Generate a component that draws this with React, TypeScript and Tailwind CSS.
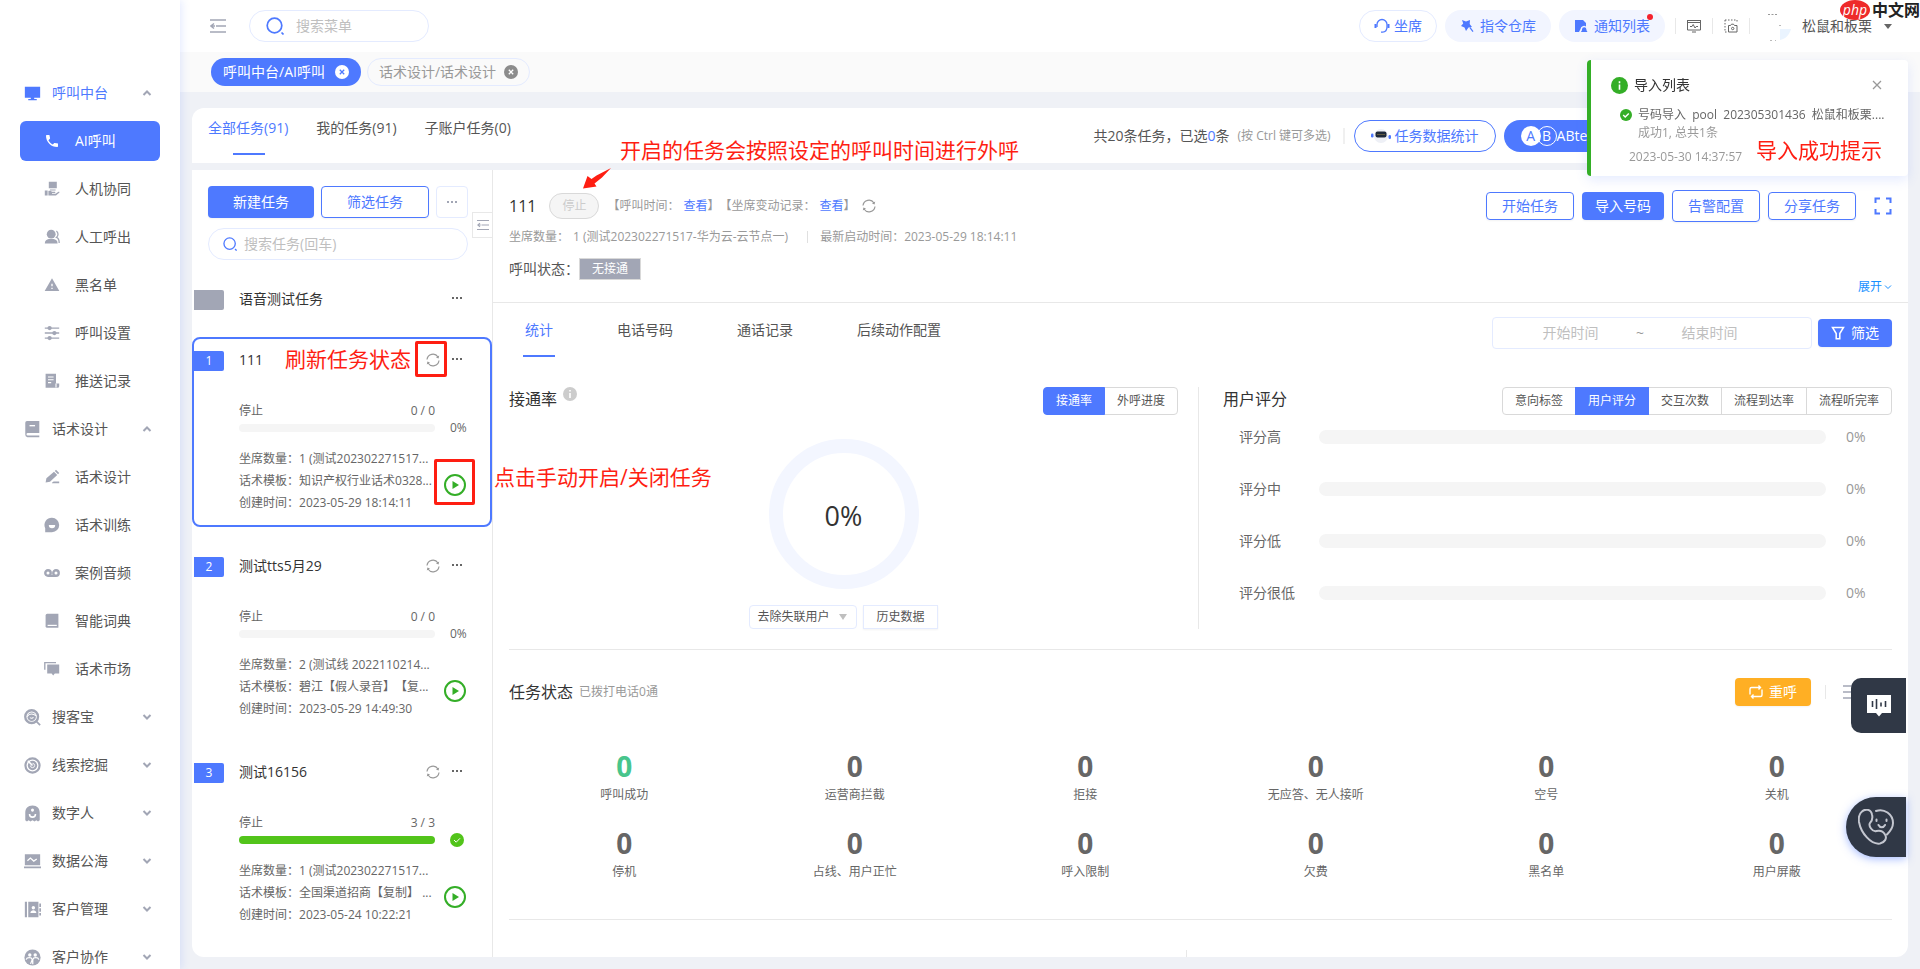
import { useState } from 'react'
import type { ReactNode } from 'react'
import { MdPhone, MdWarning } from 'react-icons/md'

const iconShapes: Record<string, ReactNode> = {
  monitor: <path d="M1 2h18v13h-7v1.6h3V18H5v-1.4h3V15H1z" />,
  handover: (
    <path d="M6 1h10v8H6zm1.500 9.500h7V12h-7zM1 12h3.500v6H1zm4.500.5c2-.6 3.500.2 4.500 1h3.500c1 0 1 1.500 0 1.500H10v.8h4.500l3.500-2.300c1.200-.6 1.800.6 1 1.300L15 18H5.500z" />
  ),
  users: (
    <>
      <circle cx="9" cy="6.500" r="5.500" />
      <path d="M1 18c0-3.500 2.500-5 5-5.500h6c2.500.5 5 2 5 5.500z" />
      <path d="M15.500 2.500a5 5 0 0 1 0 8c2.500.8 3.500 3.500 3.500 7" fill="none" stroke="currentColor" strokeWidth="1.600" />
    </>
  ),
  sliders: (
    <>
      <path d="M1 3h18v1.800H1zM1 9.200h18V11H1zM1 15.500h18v1.800H1z" />
      <circle cx="7" cy="3.900" r="2.700" />
      <circle cx="13" cy="10.100" r="2.700" />
      <circle cx="7" cy="16.400" r="2.700" />
    </>
  ),
  record: (
    <>
      <path d="M2 1h13v12h4v3.500a2 2 0 0 1-2 2H2z" />
      <path d="M5 5h7M5 8.500h7M5 12h4M15 13v5" stroke="#fff" strokeWidth="1.400" />
    </>
  ),
  script: (
    <>
      <path d="M3.500 0H18v14H4.500a1.400 1.400 0 0 0 0 3.200H18V19H4a2.800 2.800 0 0 1-2.500-3V2a2 2 0 0 1 2-2z" />
      <path d="M6.500 5.500H13" stroke="#fff" strokeWidth="1.600" />
    </>
  ),
  pen: <path d="M12.500 3.500l4 4L7.500 16 2 17l1-5.500zM13.500 2.500L15 1l4 4-1.500 1.500zM10 17.200l2-1.700h7v2.200h-9z" />,
  chat: (
    <>
      <path d="M10 1a9 9 0 1 1 0 18H1.500v-5A9 9 0 0 1 10 1z" />
      <path d="M6 10h8a4 4 0 0 1-8 0z" fill="#fff" />
    </>
  ),
  voicemail: (
    <>
      <path d="M5 12.500h10V15H5z" />
      <circle cx="5" cy="10" r="3.400" fill="none" stroke="currentColor" strokeWidth="3" />
      <circle cx="15" cy="10" r="3.400" fill="none" stroke="currentColor" strokeWidth="3" />
    </>
  ),
  book: (
    <>
      <path d="M4 1h14v17.500H4a2 2 0 0 1-2-2V3a2 2 0 0 1 2-2z" />
      <path d="M4.500 15.500H16" stroke="#fff" strokeWidth="1.500" />
    </>
  ),
  market: (
    <>
      <path d="M1 11V2h14" fill="none" stroke="currentColor" strokeWidth="1.700" />
      <path d="M4 4.500h15v11h-5.500L11.500 18l-2-2.500H4z" />
    </>
  ),
  finder: (
    <>
      <circle cx="9" cy="9" r="7.500" fill="none" stroke="currentColor" strokeWidth="2.800" />
      <circle cx="9" cy="9" r="5" />
      <path d="M3.500 9c2.500-3.500 6-4.500 11-1" fill="none" stroke="#fff" strokeWidth="1.200" />
      <path d="M7 10c1.500 1.500 3.500 1 4-.5" fill="none" stroke="#fff" strokeWidth="1.200" />
      <path d="M14.500 14.500L19 19" stroke="currentColor" strokeWidth="2" />
    </>
  ),
  radar: (
    <>
      <circle cx="10" cy="10" r="8.300" fill="none" stroke="currentColor" strokeWidth="2.600" />
      <circle cx="10" cy="10" r="5.500" />
      <path d="M4.500 4.500L10 10" stroke="#fff" strokeWidth="1.800" />
      <path d="M10 7.500a2.500 2.500 0 1 1-2.500 2.500" fill="none" stroke="#fff" />
    </>
  ),
  ghost: (
    <>
      <path d="M10 .5c5.500 0 8.500 3.500 8.500 8.500v9l-2 1.500-2-1.500-2 1.500-2.500-1.500-2.500 1.500-2-1.500-2 1.500-2-1.500V9C1.500 4 4.500.5 10 .5z" />
      <circle cx="10" cy="6" r="1.800" fill="#fff" />
      <path d="M6.500 10.500c0 5 7 5 7 0" fill="none" stroke="#fff" strokeWidth="1.800" />
    </>
  ),
  chart: (
    <>
      <path d="M1 1.500h18v13H1zM0 16h20v2H0z" />
      <path d="M4 9l3.500-3 4 3.500L15 7" fill="none" stroke="#fff" strokeWidth="1.500" />
    </>
  ),
  contacts: (
    <>
      <path d="M1 1h2.500v18H1zM5 1h12v18H5zM18 3h2v4h-2zM18 8.500h2v4h-2zM18 14h2v3h-2z" />
      <circle cx="11" cy="8" r="2" fill="#fff" />
      <path d="M7.500 14c0-4 7-4 7 0z" fill="#fff" />
    </>
  ),
  team: (
    <>
      <circle cx="10" cy="10" r="9.500" />
      <circle cx="6.800" cy="7" r="2" fill="#fff" />
      <circle cx="13.200" cy="7" r="2" fill="#fff" />
      <path d="M2.500 12.500c1-3 6.500-3 7.200 0l-2 5M17.500 12.500c-1-3-6.500-3-7.200 0v5.500" fill="none" stroke="#fff" strokeWidth="1.500" />
    </>
  ),
}

function Icon({ name, className = 'size-4' }: { name: string; className?: string }) {
  if (name === 'phone') return <MdPhone className={className} />
  if (name === 'warning') return <MdWarning className={className} />
  return (
    <svg viewBox="0 0 20 20" fill="currentColor" className={className}>
      {iconShapes[name]}
    </svg>
  )
}

function Chevron({ up = false, className = 'size-2.5' }: { up?: boolean; className?: string }) {
  return (
    <svg viewBox="0 0 10 10" fill="none" stroke="currentColor" strokeWidth="2" className={className}>
      <path d={up ? 'M1.500 7L5 3.500 8.500 7' : 'M1.500 3L5 6.500 8.500 3'} />
    </svg>
  )
}

function SearchIcon({ className }: { className: string }) {
  return (
    <svg viewBox="0 0 18 18" fill="none" stroke="currentColor" strokeWidth="1.700" className={className}>
      <circle cx="8.500" cy="8.500" r="7.300" />
      <path d="M15.500 15.500l2 2" />
    </svg>
  )
}

function FoldIcon({ className = 'size-4' }: { className?: string }) {
  return (
    <svg viewBox="0 0 16 16" fill="none" stroke="currentColor" strokeWidth="1.500" className={className}>
      <path d="M0 2h16M6 8h10M0 14h16M4 5.500L1 8l3 2.500M1 8h4" />
    </svg>
  )
}

function SyncIcon({ className = 'size-3.5' }: { className?: string }) {
  return (
    <svg viewBox="0 0 14 14" fill="none" stroke="currentColor" strokeWidth="1.200" className={className}>
      <path d="M1 6.500A6 6 0 0 1 12 4M13 7.500A6 6 0 0 1 2 10" />
      <path d="M13.200 2.600L12.600 5.600 10 4.400zM.8 11.400l.6-3L4 9.600z" fill="currentColor" stroke="none" />
    </svg>
  )
}

function CloseDot({ active = false }: { active?: boolean }) {
  return (
    <svg viewBox="0 0 14 14" className="size-3.5">
      <circle cx="7" cy="7" r="7" fill={active ? '#fff' : '#8c8c8c'} />
      <path d="M4.800 4.800l4.400 4.400M9.200 4.800L4.800 9.200" stroke={active ? '#4e79ff' : '#fff'} strokeWidth="1.300" />
    </svg>
  )
}

function Dots() {
  return (
    <svg viewBox="0 0 12 4" fill="currentColor" className="h-1 w-3">
      <path d="M1 1h2v2H1zM5 1h2v2H5zM9 1h2v2H9z" />
    </svg>
  )
}

const menu = [
  {
    icon: 'monitor',
    label: '呼叫中台',
    open: true,
    active: true,
    children: [
      { icon: 'phone', label: 'AI呼叫', active: true },
      { icon: 'handover', label: '人机协同' },
      { icon: 'users', label: '人工呼出' },
      { icon: 'warning', label: '黑名单' },
      { icon: 'sliders', label: '呼叫设置' },
      { icon: 'record', label: '推送记录' },
    ],
  },
  {
    icon: 'script',
    label: '话术设计',
    open: true,
    children: [
      { icon: 'pen', label: '话术设计' },
      { icon: 'chat', label: '话术训练' },
      { icon: 'voicemail', label: '案例音频' },
      { icon: 'book', label: '智能词典' },
      { icon: 'market', label: '话术市场' },
    ],
  },
  { icon: 'finder', label: '搜客宝' },
  { icon: 'radar', label: '线索挖掘' },
  { icon: 'ghost', label: '数字人' },
  { icon: 'chart', label: '数据公海' },
  { icon: 'contacts', label: '客户管理' },
  { icon: 'team', label: '客户协作' },
] as {
  icon: string
  label: string
  open?: boolean
  active?: boolean
  children?: { icon: string; label: string; active?: boolean }[]
}[]

function Sidebar() {
  return (
    <aside className="relative z-10 w-45 shrink-0 overflow-hidden bg-white pt-[69px] shadow-[2px_0_8px_rgba(78,121,255,0.15)]">
      {menu.map((group) => (
        <div key={group.label}>
          <button
            className={`flex h-12 w-full items-center pr-7 pl-6 ${group.active ? 'text-[#4e79ff]' : 'text-[#555]'}`}
          >
            <Icon name={group.icon} className={`size-[17px] ${group.active ? '' : 'text-[#a2a6b5]'}`} />
            <span className="ml-[11px]">{group.label}</span>
            <Chevron up={group.open} className="ml-auto size-2.5 text-[#a2a6b5]" />
          </button>
          {group.children?.map((item) => (
            <div key={item.label} className="flex h-12 items-center px-5">
              <a
                href="#"
                className={`flex h-10 w-full items-center rounded-md pl-6 ${
                  item.active ? 'bg-[#4e79ff] text-white' : 'text-[#555]'
                }`}
              >
                <Icon name={item.icon} className={`size-4 ${item.active ? '' : 'text-[#a2a6b5]'}`} />
                <span className="ml-[15px]">{item.label}</span>
              </a>
            </div>
          ))}
        </div>
      ))}
    </aside>
  )
}

function Header() {
  return (
    <header className="relative flex h-13 shrink-0 items-center bg-white pr-7 pl-[30px]">
      <button aria-label="收起菜单" className="text-[#a2a6b5]">
        <FoldIcon />
      </button>
      <label className="ml-[23px] flex h-8 w-45 items-center rounded-full border border-[#e4ebff] pl-4 text-[#4e79ff]">
        <SearchIcon className="size-[18px] shrink-0" />
        <input
          aria-label="搜索菜单"
          placeholder="搜索菜单"
          className="ml-3 w-full min-w-0 text-[#333] outline-none placeholder:text-[#bfbfbf]"
        />
      </label>

      <div className="ml-auto flex items-center">
        <button className="flex h-8 items-center gap-1 rounded-full border border-[#e4ebff] px-3.5 text-[#4e79ff]">
          <svg viewBox="0 0 16 16" fill="none" stroke="currentColor" strokeWidth="1.300" className="size-4">
            <path d="M3 9V6.500a5 5 0 0 1 10 0V9c0 3-2 5-4.500 5.200H7" />
            <path d="M1.500 6v4M14.500 6v4" strokeWidth="2" />
          </svg>
          坐席
        </button>
        <button className="ml-2 flex h-8 items-center gap-1.5 rounded-full bg-[#f2f5ff] px-[15px] text-[#4e79ff]">
          <svg viewBox="0 0 14 14" fill="currentColor" className="size-3.5">
            <path d="M2 1l4 1.500L10 1l-.3 4L12 8l-3.500.5L6 12 4.500 8.500 1 7l2.200-2.600zM9.500 9l1-.8 3 4-1 .8z" />
          </svg>
          指令仓库
        </button>
        <button className="relative ml-2 flex h-8 items-center gap-1.5 rounded-full bg-[#f2f5ff] px-[15px] text-[#4e79ff]">
          <svg viewBox="0 0 14 14" fill="currentColor" className="size-3.5">
            <path d="M1 1h8l3 3v3.500A3.500 3.500 0 0 0 6.500 10L5 13H1z" />
            <path d="M7 13c0-1 1-1 1-2.500a2.200 2.200 0 0 1 4.400 0c0 1.500 1 1.500 1 2.500z" />
          </svg>
          通知列表
          <span className="absolute top-1 right-3 size-1.5 rounded-full bg-[#f5222d]" />
        </button>
        <div className="ml-2.5 flex items-center text-[#666]">
          <span className="h-4 w-px bg-[#e8e8e8]" />
          <button aria-label="监控" className="px-[11px]">
            <svg viewBox="0 0 14 14" fill="none" stroke="currentColor" className="size-3.5">
              <path d="M0 1.500h14M.5 1.500v9.500h13V1.500M.5 3.500h13M3 7.500h2l1.200-2 1.800 3.500 1.200-1.500H11M5 13h4" />
            </svg>
          </button>
          <span className="h-4 w-px bg-[#e8e8e8]" />
          <button aria-label="截图" className="px-[11px]">
            <svg viewBox="0 0 14 14" fill="none" stroke="currentColor" className="size-3.5">
              <path d="M1 1h12v3M1 1v12h2" strokeDasharray="1.500 1.500" />
              <path d="M4.500 6.500h2l1-1.300h2l1 1.300h2.500V13H4.500z" />
              <circle cx="8.700" cy="9.500" r="1.200" />
            </svg>
          </button>
          <span className="h-4 w-px bg-[#e8e8e8]" />
        </div>
        <svg viewBox="0 0 32 32" className="ml-2.5 size-8">
          <path d="M8 4.500h9" stroke="#999" strokeDasharray="2 1.500" />
          <path d="M19 15.500h2M10 30.500h6" stroke="#bbb" strokeDasharray="2 3" />
          <path d="M20 19h11c-2 7-6 10-11 11z" fill="#eaf4ff" />
        </svg>
        <button className="ml-2.5 flex items-center gap-3 text-[#555]">
          松鼠和板栗
          <svg viewBox="0 0 8 5" fill="#666" className="h-[5px] w-2">
            <path d="M0 0h8L4 5z" />
          </svg>
        </button>
      </div>

      {/* Site mark in the corner */}
      <div className="absolute top-0 right-0 flex items-center gap-0.5 text-base leading-5 font-bold text-[#222]">
        <span className="flex h-5 w-[30px] items-center justify-center rounded-[50%] bg-[#ee2a2a] text-sm leading-5 font-normal text-white italic">
          php
        </span>
        <span>中文网</span>
      </div>
    </header>
  )
}

function PageTabs() {
  return (
    <nav className="flex h-10 shrink-0 items-center gap-1.5 bg-[#fafafa] pl-[31px]">
      <a href="#" className="flex h-7 items-center gap-2.5 rounded-full bg-[#4e79ff] px-3 text-white">
        呼叫中台/AI呼叫
        <CloseDot active />
      </a>
      <a href="#" className="flex h-7 items-center gap-2 rounded-full border border-[#e4ebff] px-[11px] text-[#999]">
        话术设计/话术设计
        <CloseDot />
      </a>
    </nav>
  )
}

function TaskScopeBar() {
  return (
    <div className="flex h-[55px] shrink-0 justify-between rounded-t-xl bg-white pr-[293px] pl-4">
      <div className="flex gap-7 text-[#555]">
        <button className="relative h-10 text-[#4e79ff]">
          全部任务(91)
          <span className="absolute top-[45px] left-[25px] h-0.5 w-8 bg-[#4e79ff]" />
        </button>
        <button className="h-10">我的任务(91)</button>
        <button className="h-10">子账户任务(0)</button>
      </div>
      <div className="flex items-center whitespace-nowrap text-[#555]">
        共20条任务，已选<span className="text-[#4e79ff]">0</span>条
        <span className="ml-2 text-xs text-[#999]">(按 Ctrl 键可多选)</span>
        <span className="mr-[9px] ml-3 h-4 w-0.5 bg-[#f0f0f0]" />
        <button className="flex h-8 items-center gap-1 rounded-full border border-[#4e79ff] px-4 text-[#4e79ff]">
          <svg viewBox="0 0 20 16" className="h-4 w-5">
            <circle cx="10" cy="8" r="7" fill="#eef0f6" />
            <rect x="4.500" y="3.500" width="11" height="6" rx="2" fill="#1f2a3a" />
            <path d="M6.500 6.500h7" stroke="#a08a4a" strokeDasharray="1 1" />
            <rect x="0" y="5.500" width="2.500" height="4" rx="1.200" fill="#4e79ff" />
            <rect x="17.500" y="7" width="2.500" height="4" rx="1.200" fill="#4e79ff" />
          </svg>
          任务数据统计
        </button>
        <button className="ml-2 flex h-8 items-center rounded-full bg-[#4e79ff] pr-4 pl-[17px] text-white">
          <span className="flex size-5 items-center justify-center rounded-full bg-white text-sm text-[#4e79ff]">A</span>
          <span className="-ml-1 flex size-5 items-center justify-center rounded-full border border-white text-sm">
            B
          </span>
          ABtest
        </button>
      </div>
    </div>
  )
}

type Task = {
  no: number
  name: string
  count: string
  done?: boolean
  seats: string
  template: string
  created: string
}

const tasks: Task[] = [
  {
    no: 1,
    name: '111',
    count: '0 / 0',
    seats: '1 (测试202302271517...',
    template: '知识产权行业话术0328...',
    created: '2023-05-29 18:14:11',
  },
  {
    no: 2,
    name: '测试tts5月29',
    count: '0 / 0',
    seats: '2 (测试线 2022110214...',
    template: '碧江【假人录音】【复...',
    created: '2023-05-29 14:49:30',
  },
  {
    no: 3,
    name: '测试16156',
    count: '3 / 3',
    done: true,
    seats: '1 (测试202302271517...',
    template: '全国渠道招商【复制】 ...',
    created: '2023-05-24 10:22:21',
  },
]

function TaskCard({ task, selected, onSelect }: { task: Task; selected: boolean; onSelect: () => void }) {
  return (
    <article
      onClick={onSelect}
      className={`relative mb-4 h-[190px] rounded-lg border-2 pt-3 ${
        selected ? 'border-[#4e79ff]' : 'border-transparent'
      }`}
    >
      <div className="flex h-5 items-start pr-[27px]">
        <span className="w-[30px] rounded-r-xs bg-[#4e79ff] text-center text-xs leading-5 text-white">{task.no}</span>
        <h3 className="ml-[15px] leading-[18px] text-[#333]">{task.name}</h3>
        <button aria-label="刷新任务状态" className="ml-auto flex h-[18px] items-center text-[#999]">
          <SyncIcon />
        </button>
        <button aria-label="更多" className="ml-[11px] flex h-4 items-center text-[#666]">
          <Dots />
        </button>
      </div>
      <div className="mt-[30px] pl-[45px] text-xs text-[#666]">
        <div className="flex w-49 justify-between leading-5">
          <span>停止</span>
          <span>{task.count}</span>
        </div>
        <div className="mt-[3px] flex h-2 items-center gap-[15px]">
          <div className={`h-2 w-49 rounded-full ${task.done ? 'bg-[#52c41a]' : 'bg-[#f5f5f5]'}`} />
          {task.done ? (
            <svg viewBox="0 0 14 14" className="size-3.5">
              <circle cx="7" cy="7" r="7" fill="#52c41a" />
              <path d="M4 7l2.200 2.200L10 5.300" fill="none" stroke="#fff" />
            </svg>
          ) : (
            <span>0%</span>
          )}
        </div>
        <div className="mt-4 flex items-start">
          <div className="w-49 leading-[22px] whitespace-nowrap">
            <p>坐席数量：{task.seats}</p>
            <p>话术模板：{task.template}</p>
            <p>创建时间：{task.created}</p>
          </div>
          <button aria-label="开启任务" className="mt-[26px] ml-[9px] text-[#34ae27]">
            <svg viewBox="0 0 22 22" className="size-[22px]">
              <circle cx="11" cy="11" r="10" fill="none" stroke="currentColor" strokeWidth="2" />
              <path d="M8.500 7l6.500 4-6.500 4z" fill="currentColor" />
            </svg>
          </button>
        </div>
      </div>

      {selected && (
        <>
          <span className="absolute top-1.5 left-[91px] text-[21px] leading-7 whitespace-nowrap text-[#fe1e12]">
            刷新任务状态
          </span>
          <span className="absolute top-0.5 right-[43px] h-9 w-8 rounded-xs border-3 border-[#fe1e12]" />
          <span className="absolute right-[15px] bottom-5 h-[46px] w-[41px] rounded-xs border-3 border-[#fe1e12]" />
          <span className="absolute top-[124px] left-[300px] z-10 text-[21px] leading-7 whitespace-nowrap text-[#fe1e12]">
            点击手动开启/关闭任务
          </span>
        </>
      )}
    </article>
  )
}

function TaskList() {
  const [selected, setSelected] = useState(1)

  return (
    <section className="relative w-[301px] shrink-0 border-r border-[#e8e8e8] pt-4">
      <div className="flex gap-[7px] pr-6 pl-4">
        <button className="h-8 flex-1 rounded-sm bg-[#4e79ff] text-white shadow-xs">新建任务</button>
        <button className="h-8 flex-1 rounded-sm border border-[#4e79ff] text-[#4e79ff] shadow-xs">筛选任务</button>
        <button
          aria-label="更多操作"
          className="flex size-8 items-center justify-center rounded-sm border border-[#e4ebff] text-[#a2a6b5]"
        >
          <Dots />
        </button>
      </div>
      <label className="mt-2.5 mr-6 ml-4 flex h-8 items-center rounded-full border border-[#e4ebff] pl-3.5 text-[#4e79ff]">
        <SearchIcon className="size-3.5 shrink-0" />
        <input
          aria-label="搜索任务"
          placeholder="搜索任务(回车)"
          className="ml-[7px] w-full min-w-0 text-[#333] outline-none placeholder:text-[#bfbfbf]"
        />
      </label>
      <button
        aria-label="收起列表"
        className="absolute top-[42px] right-0 flex h-[26px] w-5 items-center justify-center border border-r-0 border-[#e8e8e8] bg-white text-[#a2a6b5]"
      >
        <FoldIcon className="size-3" />
      </button>

      <div className="mt-4">
        <article className="mb-4 h-[45px] px-0.5 pt-3.5">
          <div className="flex h-5 items-start pr-[27px]">
            <span className="h-5 w-[30px] rounded-r-xs bg-[#a2a6b5]" />
            <h3 className="ml-[15px] leading-[18px] text-[#333]">语音测试任务</h3>
            <button aria-label="更多" className="ml-auto flex h-4 items-center text-[#666]">
              <Dots />
            </button>
          </div>
        </article>
        {tasks.map((task) => (
          <TaskCard key={task.no} task={task} selected={selected === task.no} onSelect={() => setSelected(task.no)} />
        ))}
      </div>
    </section>
  )
}

function Segmented({ items, value }: { items: string[]; value: string }) {
  const [current, setCurrent] = useState(value)
  return (
    <div className="flex h-7 text-xs">
      {items.map((item) => (
        <button
          key={item}
          onClick={() => setCurrent(item)}
          className={`-ml-px border px-3 whitespace-nowrap first:ml-0 first:rounded-l-sm last:rounded-r-sm ${
            current === item ? 'relative border-[#4e79ff] bg-[#4e79ff] text-white' : 'border-[#d9d9d9] text-[#555]'
          }`}
        >
          {item}
        </button>
      ))}
    </div>
  )
}

function DetailHeader() {
  return (
    <div className="relative flex justify-between border-b border-[#e8e8e8] px-4 pt-5 pb-1.5">
      <div className="pb-4 text-xs whitespace-nowrap text-[#999]">
        <div className="flex h-8 items-center">
          <h2 className="text-base text-[#333]">111</h2>
          <button className="ml-[13px] h-[26px] w-[50px] rounded-full border border-[#d9d9d9] bg-[#f5f5f5] text-[#ccc]">
            停止
          </button>
          <span className="ml-2">【呼叫时间：</span>
          <a href="#" className="ml-1 text-[#4e79ff]">
            查看
          </a>
          <span>】【坐席变动记录：</span>
          <a href="#" className="ml-1 text-[#4e79ff]">
            查看
          </a>
          <span>】</span>
          <button aria-label="刷新" className="ml-1.5">
            <SyncIcon />
          </button>
        </div>
        <div className="mt-1 flex h-[22px] items-center">
          <span>坐席数量：</span>
          <span className="ml-1">1 (测试202302271517-华为云-云节点一)</span>
          <span className="mr-3 ml-[19px] h-3 w-px bg-[#e0e0e0]" />
          <span>最新启动时间：2023-05-29 18:14:11</span>
        </div>
        <div className="mt-2.5 flex h-[22px] items-center">
          <span className="text-sm text-[#555]">呼叫状态：</span>
          <span className="border border-[#d9d9d9] bg-[#a2a6b5] px-3 leading-5 text-white">无接通</span>
        </div>
      </div>
      <div className="flex flex-col items-end justify-between">
        <div className="flex items-center gap-2 text-[#4e79ff]">
          <button className="h-7 rounded-sm border border-[#4e79ff] px-[15px] shadow-xs">开始任务</button>
          <button className="h-7 rounded-sm bg-[#4e79ff] px-[13px] text-white shadow-xs">导入号码</button>
          <button className="h-8 rounded-sm border border-[#4e79ff] px-[15px] shadow-xs">告警配置</button>
          <button className="h-7 rounded-sm border border-[#4e79ff] px-[15px] shadow-xs">分享任务</button>
          <button aria-label="全屏" className="ml-2.5">
            <svg viewBox="0 0 18 18" fill="none" stroke="currentColor" strokeWidth="2" className="size-[18px]">
              <path d="M6 1.500H1.500V6M12 1.500h4.500V6M6 16.500H1.500V12M12 16.500h4.500V12" />
            </svg>
          </button>
        </div>
        <a href="#" className="flex items-center gap-0.5 text-xs leading-[18px] text-[#1890ff]">
          展开
          <svg viewBox="0 0 8 8" fill="none" stroke="currentColor" className="size-2">
            <path d="M1 2.500l3 3 3-3" />
          </svg>
        </a>
      </div>

      {/* Callout for the run state */}
      <span className="absolute -top-[34px] left-[127px] text-[21px] leading-7 whitespace-nowrap text-[#fe1e12]">
        开启的任务会按照设定的呼叫时间进行外呼
      </span>
      <svg viewBox="0 0 28 21" fill="#fe1e12" className="absolute -top-0.5 left-[90px] h-[21px] w-7">
        <path d="M28 0L13.500 7.500 8.500 11 4.500 8 0 20.500l13.500-2-2-3L19 9.500z" />
      </svg>
    </div>
  )
}

function DetailTabs() {
  return (
    <div className="flex h-[54px] justify-between pr-4 pl-8 text-[#555]">
      <div className="flex gap-16">
        <button className="relative text-[#4e79ff]">
          统计
          <span className="absolute -inset-x-0.5 bottom-0 h-0.5 bg-[#4e79ff]" />
        </button>
        <button>电话号码</button>
        <button>通话记录</button>
        <button>后续动作配置</button>
      </div>
      <div className="flex items-center gap-1.5 pt-1.5">
        <div className="flex h-8 w-80 items-center rounded-sm border border-[#e4ebff] pr-6">
          <input
            aria-label="开始时间"
            placeholder="开始时间"
            className="w-0 flex-1 pl-3 text-center outline-none placeholder:text-[#bfbfbf]"
          />
          <span className="text-[#999]">~</span>
          <input
            aria-label="结束时间"
            placeholder="结束时间"
            className="w-0 flex-1 pr-3 text-center outline-none placeholder:text-[#bfbfbf]"
          />
        </div>
        <button className="flex h-7 items-center gap-1.5 rounded-sm bg-[#4e79ff] px-[13px] text-white shadow-xs">
          <svg viewBox="0 0 14 14" fill="none" stroke="currentColor" strokeWidth="1.500" className="size-3.5">
            <path d="M1.500 1.500h11L8.800 7.500v5.200H5.200V7.500z" />
          </svg>
          筛选
        </button>
      </div>
    </div>
  )
}

const scores = ['评分高', '评分中', '评分低', '评分很低']

function Overview() {
  return (
    <div className="mt-[30px] flex pb-5">
      <div className="flex-1 border-r border-[#e8e8e8] pr-5">
        <div className="flex h-7 justify-between">
          <h3 className="flex h-6 items-start text-base leading-6 text-[#333]">
            接通率
            <svg viewBox="0 0 14 14" className="ml-1.5 size-3.5">
              <circle cx="7" cy="7" r="7" fill="#ccc" />
              <path d="M7 6v5M7 3v1.600" stroke="#fff" strokeWidth="1.600" />
            </svg>
          </h3>
          <Segmented items={['接通率', '外呼进度']} value="接通率" />
        </div>
        <div className="mt-6 flex justify-center">
          <div className="flex size-[150px] items-center justify-center rounded-full border-14 border-[#f3f6ff] pt-1 text-[27px] text-[#333]">
            0%
          </div>
        </div>
        <div className="mt-4 flex items-center justify-center gap-1.5 text-xs text-[#555]">
          <div className="relative">
            <select
              aria-label="用户范围"
              className="h-6 w-[108px] appearance-none rounded-sm border border-[#e4ebff] pl-[7px] outline-none"
            >
              <option>去除失联用户</option>
            </select>
            <svg viewBox="0 0 8 6" fill="#bfbfbf" className="pointer-events-none absolute top-[9px] right-2.5 h-1.5 w-2">
              <path d="M0 0h8L4 6z" />
            </svg>
          </div>
          <button className="h-6 border border-[#e4ebff] px-3 shadow-xs">历史数据</button>
        </div>
      </div>
      <div className="flex-1 pl-6">
        <div className="flex h-7 justify-between">
          <h3 className="text-base leading-6 text-[#333]">用户评分</h3>
          <Segmented items={['意向标签', '用户评分', '交互次数', '流程到达率', '流程听完率']} value="用户评分" />
        </div>
        <div className="mt-0.5 flex flex-col gap-3 pl-4">
          {scores.map((label) => (
            <div key={label} className="flex h-10 items-center">
              <span className="w-20 text-[#666]">{label}</span>
              <div className="h-3.5 flex-1 rounded-full bg-[#f5f5f5]" />
              <span className="w-[66px] pl-5 text-[#999]">0%</span>
            </div>
          ))}
        </div>
      </div>
    </div>
  )
}

const statuses = [
  '呼叫成功',
  '运营商拦截',
  '拒接',
  '无应答、无人接听',
  '空号',
  '关机',
  '停机',
  '占线、用户正忙',
  '呼入限制',
  '欠费',
  '黑名单',
  '用户屏蔽',
]

function TaskStatus() {
  return (
    <div className="border-y border-[#e8e8e8] pt-7 pb-9">
      <div className="flex h-7 items-center">
        <h3 className="text-base text-[#333]">任务状态</h3>
        <span className="ml-1.5 text-xs text-[#999]">已拨打电话0通</span>
        <button className="ml-auto flex h-7 items-center gap-1.5 rounded-sm bg-[#ffaf24] px-3.5 text-white shadow-xs">
          <svg viewBox="0 0 14 14" fill="none" stroke="currentColor" strokeWidth="1.400" className="size-3.5">
            <path d="M1 9.500V4q0-1.500 1.500-1.500h8.500M9.500.5l2 2-2 2M13 4.500V10q0 1.500-1.500 1.500H3M4.500 9.500l-2 2 2 2" />
          </svg>
          重呼
        </button>
        <span className="ml-3.5 h-3.5 w-px bg-[#e8e8e8]" />
        <button aria-label="列表" className="mr-[31px] ml-[17px] text-[#a2a6b5]">
          <svg viewBox="0 0 18 14" stroke="currentColor" strokeWidth="1.600" className="h-3.5 w-[18px]">
            <path d="M0 1h18M0 7h18M0 13h18" />
          </svg>
        </button>
      </div>
      <dl className="mt-[42px] grid grid-cols-6 gap-y-[19px] text-center">
        {statuses.map((label, i) => (
          <div key={label} className="flex flex-col-reverse">
            <dt className="text-xs leading-[22px] text-[#666]">{label}</dt>
            <dd className={`text-[28px] leading-9 font-bold ${i === 0 ? 'text-[#48c58c]' : 'text-[#666]'}`}>0</dd>
          </div>
        ))}
      </dl>
    </div>
  )
}

function Toast() {
  return (
    <div
      role="status"
      className="fixed top-15 right-3 z-20 w-[321px] rounded-sm border-l-4 border-[#34ae27] bg-white pt-3.5 pr-5 pb-1.5 pl-5 text-xs shadow-[0_4px_12px_rgba(78,121,255,0.15)]"
    >
      <div className="flex h-[22px] items-center">
        <svg viewBox="0 0 18 18" className="size-[17px]">
          <circle cx="9" cy="9" r="9" fill="#34ae27" />
          <path d="M9 8v5.500M9 4.500v2" stroke="#fff" strokeWidth="1.700" />
        </svg>
        <span className="ml-1.5 text-sm text-[#333]">导入列表</span>
        <button aria-label="关闭" className="mr-1.5 ml-auto text-[#999]">
          <svg viewBox="0 0 10 10" stroke="currentColor" strokeWidth="1.300" className="size-2.5">
            <path d="M1 1l8 8M9 1L1 9" />
          </svg>
        </button>
      </div>
      <div className="mt-2.5 flex pl-[9px] leading-[18px]">
        <svg viewBox="0 0 12 12" className="mt-[3px] size-3 shrink-0">
          <circle cx="6" cy="6" r="6" fill="#34ae27" />
          <path d="M3.200 6l2 2 3.600-3.600" fill="none" stroke="#fff" strokeWidth="1.400" />
        </svg>
        <div className="ml-1.5 text-[#666]">
          <p className="whitespace-pre">号码导入  pool  202305301436  松鼠和板栗....</p>
          <p className="text-[#999]">成功1, 总共1条</p>
        </div>
      </div>
      <div className="mt-1.5 flex h-[22px] items-center pb-1 pl-[18px] text-[#999]">2023-05-30 14:37:57</div>
      <span className="absolute right-[26px] bottom-3 text-[21px] leading-7 text-[#fe1e12]">导入成功提示</span>
    </div>
  )
}

function FloatingTools() {
  return (
    <div className="fixed right-3.5 bottom-28 z-20 flex flex-col items-end gap-16 text-white">
      <button aria-label="语音反馈" className="flex size-[55px] items-center justify-center rounded-l-[10px] bg-[#303846]">
        <svg viewBox="0 0 24 22" className="h-[22px] w-6">
          <path d="M0 0h24v18h-9l-3 3.500L9 18H0z" fill="#fff" />
          <path d="M5.500 6v6M9.500 4v10M14 7.500v4M18.500 6v6" stroke="#303846" strokeWidth="1.600" />
        </svg>
      </button>
      <button
        aria-label="电话助手"
        className="flex size-[60px] items-center justify-center rounded-l-full bg-[#303846] text-[#c3c6cf] shadow-[0_2px_8px_rgba(78,121,255,0.5)]"
      >
        <svg viewBox="0 0 36 36" fill="none" stroke="currentColor" strokeWidth="2" strokeLinecap="round" className="size-9">
          <path d="M4 2.500C7-.5 13 0 14 5.500c1 4 .5 6-2 8.500-1 1.500-.8 3 1 5.500s3.500 3 5.500 2.500c4-1 6.500 0 8.500 3.500 2.500 4-.5 8-5 9C13 36 3 24 1 13 .3 8.500 1 5 4 2.500z" />
          <path d="M18 2c8-3 17 3 17 12 0 5-2.500 8-6 11.500M18.500 10.500V12M28.500 10.500V12M20.500 16c1.500 3 5 3 6.500 0" />
        </svg>
      </button>
    </div>
  )
}

export default function App() {
  return (
    <div className="flex h-screen overflow-hidden bg-[#eff1f6] font-['Open_Sans','Noto_Sans_CJK_SC',sans-serif] text-sm text-[#333] [text-spacing-trim:space-all]">
      <Sidebar />
      <div className="flex min-w-0 flex-1 flex-col">
        <Header />
        <PageTabs />
        <main className="flex min-h-0 flex-1 flex-col gap-[7px] px-3 pt-4 pb-3">
          <TaskScopeBar />
          <div className="flex min-h-0 flex-1 rounded-b-xl bg-white">
            <TaskList />
            <section className="flex min-w-0 flex-1 flex-col">
              <DetailHeader />
              <DetailTabs />
              <div className="min-h-0 flex-1 overflow-hidden px-4">
                <Overview />
                <TaskStatus />
                <div className="flex pt-[30px] text-base leading-[30px]">
                  <h3 className="w-[49%] border-r border-[#e8e8e8]">意向标签</h3>
                  <h3 className="pl-7">意向标签</h3>
                </div>
              </div>
            </section>
          </div>
        </main>
      </div>
      <Toast />
      <FloatingTools />
    </div>
  )
}
